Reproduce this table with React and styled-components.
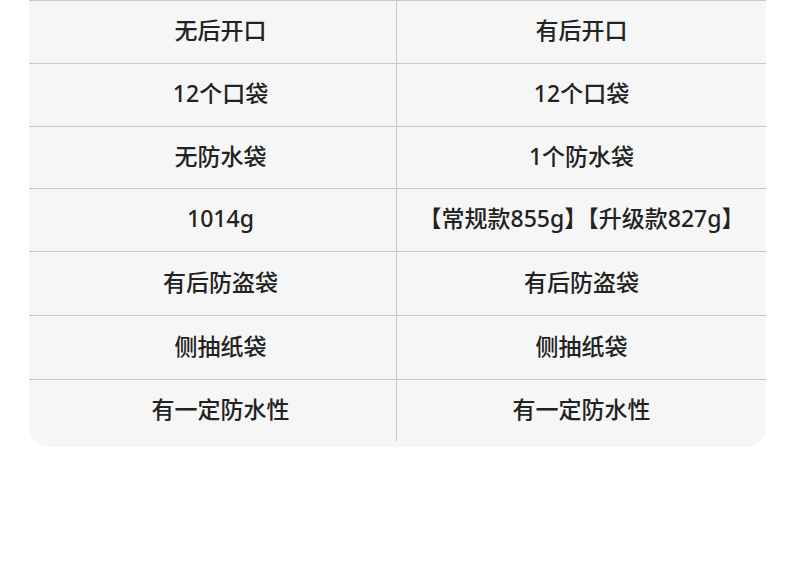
import styled, { createGlobalStyle } from 'styled-components';

const GlobalStyle = createGlobalStyle`
    body {
        margin: 0;
        background: #ffffff;
        font-family: "Noto Sans", "Noto Sans CJK SC", sans-serif;
    }
`;

const Page = styled.div`
    width: 790px;
    height: 568px;
    padding-left: 29px;
    box-sizing: border-box;
`;

const Card = styled.div`
    width: 737px;
    background: #f6f6f6;
    border-top: 1px solid #c9c9c9;
    border-radius: 0 0 20px 20px;
    padding-bottom: 6px;
`;

const Row = styled.div`
    display: grid;
    grid-template-columns: 368px 1fr;
    height: ${(p) => p.$h}px;
    border-bottom: ${(p) => (p.$last ? 'none' : '1px solid #c9c9c9')};
`;

const Cell = styled.div`
    display: flex;
    align-items: center;
    justify-content: center;
    padding-bottom: 3px;
    padding-left: ${(p) => (p.$divider ? '16px' : '0')};
    box-sizing: border-box;
    font-family: "Noto Sans", "Noto Sans CJK SC", sans-serif;
    font-size: 23px;
    font-weight: 500;
    line-height: 1;
    color: #222222;
    border-right: ${(p) => (p.$divider ? '1px solid #c9c9c9' : 'none')};
`;

const rows = [
    ['无后开口', '有后开口', 62],
    ['12个口袋', '12个口袋', 62],
    ['无防水袋', '1个防水袋', 61],
    ['1014g', '【常规款855g】【升级款827g】', 62],
    ['有后防盗袋', '有后防盗袋', 63],
    ['侧抽纸袋', '侧抽纸袋', 63],
    ['有一定防水性', '有一定防水性', 61],
];

export default function App() {
    return (
        <Page>
            <GlobalStyle />
            <Card>
                {rows.map(([a, b, h], i) => (
                    <Row key={i} $h={h} $last={i === rows.length - 1}>
                        <Cell $divider>{a}</Cell>
                        <Cell>{b}</Cell>
                    </Row>
                ))}
            </Card>
        </Page>
    );
}
